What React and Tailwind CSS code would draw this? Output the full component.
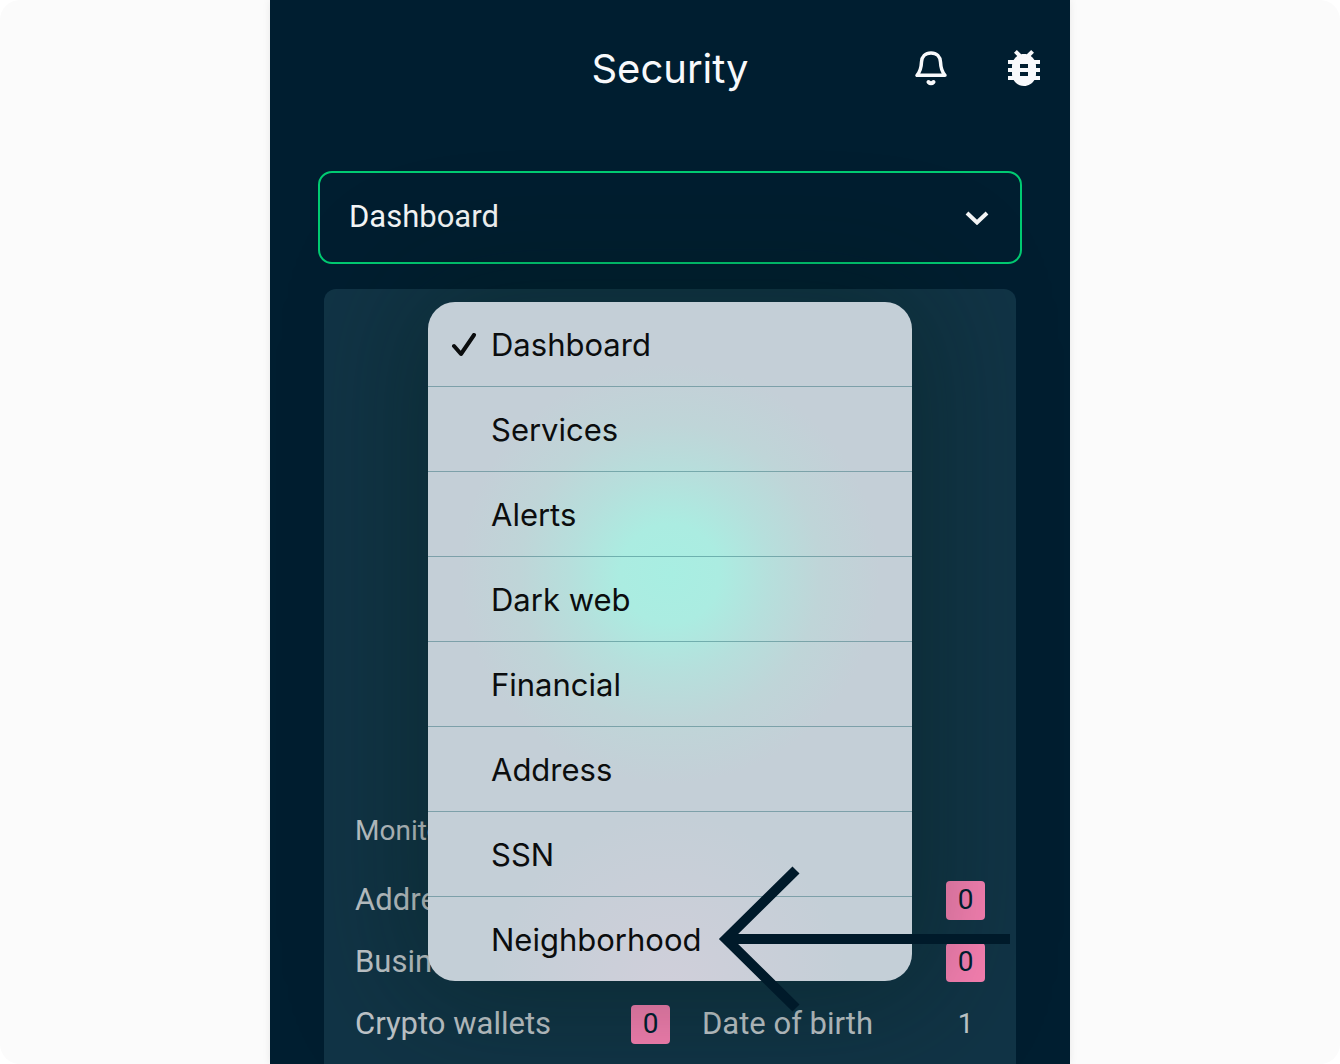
import React, { useState } from 'react';
import { MdBugReport } from 'react-icons/md';

const views = [
  'Dashboard',
  'Services',
  'Alerts',
  'Dark web',
  'Financial',
  'Address',
  'SSN',
  'Neighborhood',
];

// rows without a count show their label only
const monitored = [
  { label: 'Addresses' },
  { label: '', count: 0 },
  { label: 'Business' },
  { label: '', count: 0 },
  { label: 'Crypto wallets', count: 0 },
  { label: 'Date of birth', count: 1 },
];

const BellIcon = () => (
  <svg width="36" height="38" viewBox="0 0 36 38" fill="none" stroke="currentColor" strokeWidth="3.5" aria-hidden="true">
    <path
      d="M18 4C12.2 4 8.8 7.8 8.5 13C8.3 18.5 7.7 22 4 26.3H32C28.3 22 27.7 18.5 27.5 13C27.2 7.8 23.8 4 18 4Z"
      strokeLinejoin="round"
    />
    <path d="M15.5 33Q18 35.5 20.5 33" strokeWidth="4" strokeLinecap="round" />
  </svg>
);

const CheckIcon = () => (
  <svg width="26" height="24" viewBox="0 0 26 24" fill="none" stroke="currentColor" strokeWidth="4" aria-hidden="true">
    <path d="M3 13L10 21L23 2" strokeLinecap="round" strokeLinejoin="round" />
  </svg>
);

const Header = () => (
  <header className="grid grid-cols-[1fr_auto_1fr] items-center h-[136px] px-[22px]">
    <h1 className="col-start-2 pt-[2px] font-[Inter,sans-serif] text-[40px] leading-[48px] text-[#f8f9fb]">
      Security
    </h1>
    <div className="flex items-center justify-end gap-[51px] text-[#f8f9fb]">
      <button type="button" aria-label="Notifications">
        <BellIcon />
      </button>
      <button type="button" aria-label="Report a bug">
        <MdBugReport size={48} />
      </button>
    </div>
  </header>
);

const ViewMenu = ({ selected, onSelect }) => (
  <ul className="absolute top-[13px] inset-x-0 mx-auto w-[484px] max-w-full overflow-hidden rounded-[27px] bg-[#c4cfd7] bg-[radial-gradient(circle_at_50%_40%,#a8eee2_0%,#abece1_50px,#b6dfdc_100px,#bfd5d8_150px,#c4cfd700_210px),radial-gradient(circle_at_50%_102%,#d0cfda_0%,#c4cfd700_180px)] shadow-[0_0_120px_20px_rgba(0,28,20,0.35)]">
    {views.map((view) => (
      <li key={view} className="border-b border-[#145a64]/40 last:border-b-0">
        <button
          type="button"
          onClick={() => onSelect(view)}
          className="grid w-full grid-cols-[40px_1fr] items-center h-[84px] pt-[2px] pl-[23px] text-left font-[Inter,sans-serif] text-[31px] leading-[40px] text-[#0b0d0e]"
        >
          {view === selected && <CheckIcon />}
          <span className="col-start-2">{view}</span>
        </button>
      </li>
    ))}
  </ul>
);

const CountBadge = ({ count }) => (
  <span
    className={
      count === 0
        ? 'w-[39px] h-[39px] rounded bg-[#f880b2] text-center text-[28px] leading-[38px] text-[#001e30]'
        : 'w-[39px] text-center text-[28px] leading-[38px] text-[#c0c6ca]'
    }
  >
    {count}
  </span>
);

const PointerArrow = () => (
  <svg
    width="292"
    height="148"
    viewBox="0 0 292 148"
    fill="none"
    stroke="#001a2a"
    strokeWidth="10"
    className="absolute right-[6px] top-[576px] pointer-events-none"
    aria-hidden="true"
  >
    <path d="M78 5L8 74L78 143" />
    <path d="M12 74H292" />
  </svg>
);

export default function App() {
  const [view, setView] = useState('Dashboard');

  return (
    <div className="flex min-h-screen justify-center rounded-[20px] bg-[#fbfbfb] font-[Roboto,sans-serif]">
      <main className="flex w-full max-w-[800px] flex-col overflow-hidden bg-[#001e30] shadow-[0_0_8px_rgba(0,0,0,0.08)]">
        <Header />

        <div className="mt-[35px] px-12">
          <div className="relative">
            <select
              aria-label="View"
              value={view}
              onChange={(e) => setView(e.target.value)}
              className="w-full h-[93px] appearance-none rounded-[14px] border-2 border-[#00cb72] px-[29px] text-[31px] text-[#f4f6f7]"
            >
              {views.map((name) => (
                <option key={name}>{name}</option>
              ))}
            </select>
            <svg
              width="24"
              height="14"
              viewBox="0 0 24 14"
              fill="none"
              stroke="#f4f6f7"
              strokeWidth="4"
              className="absolute right-[33px] top-[40px] pointer-events-none"
              aria-hidden="true"
            >
              <path d="M2 2L12 11.5L22 2" />
            </svg>
          </div>
        </div>

        <section className="relative mx-[54px] mt-[25px] flex flex-1 flex-col justify-end rounded-t-xl bg-[#113446] px-[31px] pt-[520px] pb-[9px] text-[#c0c6ca]">
          <h2 className="mb-[17px] text-[28px] leading-[42px]">Monitored</h2>
          <ul className="grid grid-cols-[315fr_283fr] gap-x-8">
            {monitored.map((item, i) => (
              <li key={i} className="flex h-[62px] items-center justify-between text-[31px] leading-[40px]">
                <span>{item.label}</span>
                {item.count !== undefined && <CountBadge count={item.count} />}
              </li>
            ))}
          </ul>

          <ViewMenu selected={view} onSelect={setView} />
          <PointerArrow />
        </section>
      </main>
    </div>
  );
}
